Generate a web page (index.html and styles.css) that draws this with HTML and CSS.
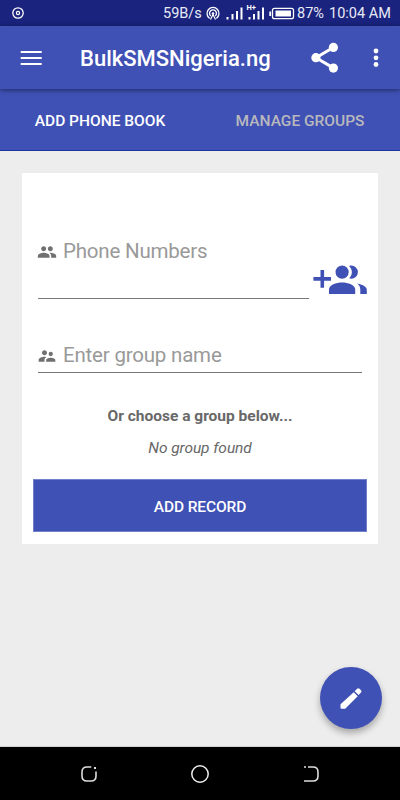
FILE: index.html
```html
<!DOCTYPE html>
<html lang="en">
<head>
<meta charset="utf-8">
<title>BulkSMSNigeria.ng</title>
<link rel="stylesheet" href="styles.css">
</head>
<body>
<div class="screen">
  <header class="status">
    <svg class="status-disc" width="14" height="14" viewBox="0 0 14 14"><circle cx="7" cy="7" r="5.2" fill="none" stroke="#fff" stroke-width="1.3"/><circle cx="7" cy="7" r="1.6" fill="none" stroke="#fff" stroke-width="1.2"/></svg>
    <span class="speed">59B/s</span>
    <svg class="status-icons" width="92" height="26" viewBox="0 0 92 26" fill="none" stroke="#fff">
      <path d="M4.6 18.4A6 6 0 1 1 11.4 18.4M5.7 16A3.5 3.5 0 1 1 10.3 16" stroke-width="1.3"/>
      <circle cx="8" cy="13.5" r="1.3" fill="#fff" stroke="none"/><path d="M8 14.5L5.5 19.5M8 14.5L10.5 19.5" stroke-width="1.2"/>
      <path d="M22.5 17v2.5M27.5 14v5.5M32 11v8.5M36.5 7.5v12" stroke-width="2"/>
      <path d="M44.5 17v2.5M49 14v5.5M53.5 11v8.5M58 7.5v12" stroke-width="2"/>
      <text class="network" x="41.5" y="10" fill="#fff" stroke="none">H+</text>
      <rect x="67.5" y="8.3" width="21" height="10.4" rx="2" stroke-width="1.3"/><rect x="70.5" y="10.5" width="15.5" height="6" fill="#fff" stroke="none"/><path d="M65.2 11.5v4.5" stroke-width="1.8"/>
    </svg>
    <span class="battery">87%</span>
    <span class="clock">10:04 AM</span>
  </header>
  <div class="toolbar">
    <svg class="menu" width="22" height="16" viewBox="0 0 22 16" stroke="#fff" stroke-width="2"><path d="M.7 2h21M.7 8h21M.7 14h21"/></svg>
    <h1 class="title">BulkSMSNigeria.ng</h1>
    <svg class="share" width="28" height="32" viewBox="0 0 28 32"><path d="M22.7 5.3L5 15.7l17.7 10.4" fill="none" stroke="#fff" stroke-width="3"/><g fill="#fff"><circle cx="22.4" cy="5.4" r="4.6"/><circle cx="4.9" cy="15.7" r="4.6"/><circle cx="22.4" cy="26.1" r="4.6"/></g></svg>
    <svg class="more" width="6" height="20" viewBox="0 0 6 20" fill="#fff"><circle cx="3" cy="3" r="2.4"/><circle cx="3" cy="9.8" r="2.4"/><circle cx="3" cy="16.5" r="2.4"/></svg>
  </div>
  <nav class="tabs"><span class="tab active">ADD PHONE BOOK</span><span class="tab">MANAGE GROUPS</span></nav>
  <main class="content">
    <section class="card">
      <div class="numbers">
        <div class="field field-numbers">
          <svg width="20" height="20" viewBox="0 0 24 24" fill="#707070"><path d="M16 11c1.66 0 2.99-1.34 2.99-3S17.66 5 16 5s-3 1.34-3 3 1.34 3 3 3zm-8 0c1.66 0 2.99-1.34 2.99-3S9.66 5 8 5 5 6.34 5 8s1.34 3 3 3zm0 2c-2.33 0-7 1.17-7 3.5V19h14v-2.5c0-2.33-4.67-3.5-7-3.5zm8 0c-.29 0-.62.02-.97.05 1.16.84 1.97 1.97 1.97 3.45V19h6v-2.5c0-2.33-4.67-3.5-7-3.5z"/></svg>
          <span class="hint">Phone Numbers</span>
        </div>
        <svg class="add-people" width="56" height="34" viewBox="0 0 56 34" fill="#3f51b5">
          <path d="M7.5 7h3.6v7.1H18v3.6h-6.9v7H7.5v-7H.4v-3.6h7.1z"/>
          <circle cx="29.1" cy="9.1" r="6.6"/>
          <path d="M38.3 2.5a6.6 6.6 0 1 1 0 13.2c-.8 0-1.5-.1-2.2-.4 3.7-3.6 3.7-8.8 0-12.4.7-.3 1.4-.4 2.2-.4zM16 31v-4.7c0-4.1 7.2-6.7 13.1-6.7s13.1 2.6 13.1 6.7V31zM44.3 20.5c4.8 1 9.5 3.1 9.5 6.2V31h-6.5v-4.5c0-2.6-1.2-4.4-3-6z"/>
        </svg>
      </div>
      <div class="field field-group">
        <svg width="20" height="20" viewBox="0 0 24 24" fill="#707070"><path d="M16.5 12c1.38 0 2.49-1.12 2.49-2.5S17.88 7 16.5 7 14 8.12 14 9.5s1.12 2.5 2.5 2.5zM9 11c1.66 0 2.99-1.34 2.99-3S10.66 5 9 5 6 6.34 6 8s1.34 3 3 3zm7.5 3c-1.83 0-5.5.92-5.5 2.75V19h11v-2.25c0-1.83-3.67-2.75-5.5-2.75zM9 13c-2.33 0-7 1.17-7 3.5V19h7v-2.25c0-.85.33-2.34 2.37-3.47C10.5 13.1 9.66 13 9 13z"/></svg>
        <span class="hint">Enter group name</span>
      </div>
      <p class="choose">Or choose a group below...</p>
      <p class="empty">No group found</p>
      <button class="submit">ADD RECORD</button>
    </section>
    <button class="fab" aria-label="Edit"><svg width="28" height="28" viewBox="0 0 28 28" fill="#fff"><path d="M3.5 20.2v3.6q0 1 1 1h3.7L20.7 12.2l-4-4zM17.7 7.2l2.4-2.5q1.2-1.1 2.4 0l1.5 1.5q1.1 1.2 0 2.4l-2.4 2.5z"/></svg></button>
  </main>
  <footer class="navbar">
    <svg width="18" height="18" viewBox="0 0 18 18" fill="none" stroke="#ddd" stroke-width="1.6"><path d="M11.3 2H7Q2 2 2 7v4q0 5 5 5h4q5 0 5-5V6.5"/><path d="M14 3h2" stroke-width="2"/></svg>
    <svg width="20" height="20" viewBox="0 0 20 20" fill="none" stroke="#eee" stroke-width="1.5"><circle cx="10" cy="10" r="8.2"/></svg>
    <svg width="18" height="18" viewBox="0 0 18 18" fill="none" stroke="#ddd" stroke-width="1.6"><path d="M6 2h5q5 0 5 5v4q0 5-5 5H2M2 2h2"/></svg>
  </footer>
</div>
</body>
</html>
```
FILE: styles.css
```css
* { box-sizing: border-box; }
body { margin: 0; font-family: Roboto, sans-serif; }
svg { display: block; flex: none; }
.screen { width: 400px; height: 800px; display: flex; flex-direction: column; overflow: hidden; background: #ededed; }
.status { height: 26px; flex: none; display: flex; align-items: center; background: #1a237e; color: #e8eaf6; font-size: 14.5px; padding: 1px 0 0 11px; white-space: nowrap; }
.status-disc { margin-top: -1px; }
.status-icons { margin-top: -1px; }
.speed { width: 42px; margin-left: 138px; }
.network { font: 700 7.5px Roboto, sans-serif; }
.battery { width: 32px; }
.clock { width: 62px; }
.toolbar { height: 63px; flex: none; display: flex; align-items: center; padding-left: 20px; background: #3f51b5; color: #fff; position: relative; box-shadow: 0 1px 5px rgba(0, 0, 0, .5); }
.menu { margin-top: 1px; }
.title { margin: 2px 0 0 38px; width: 231px; font-size: 22px; line-height: 28px; font-weight: 500; }
.share { margin-top: 1px; }
.more { margin-left: 33.5px; }
.tabs { height: 62px; flex: none; display: flex; background: #3f51b5; border-bottom: 1px solid #1a34a0; }
.tab { width: 50%; display: flex; align-items: center; justify-content: center; font-size: 15.5px; font-weight: 500; color: #b9b9bd; padding-top: 2px; }
.tab.active { color: #fff; }
.content { flex: 1; position: relative; padding: 22px; border-bottom: 1px solid #d0d0d0; }
.card { height: 371px; background: #fff; padding: 62px 11px 12px; display: flex; flex-direction: column; }
.numbers { display: flex; margin-left: 5px; }
.field { display: flex; flex: none; border-bottom: 1px solid #777; }
.field svg { margin: 7px 0 0 -1px; }
.field-numbers { width: 271px; height: 64px; }
.hint { margin-left: 6px; font-size: 20.5px; letter-spacing: -.2px; line-height: 33px; color: #999; white-space: nowrap; }
.add-people { margin: 28px 0 0 4px; }
.field-group { width: 324px; height: 34px; margin: 40px 0 0 5px; }
.choose, .empty { margin: 0; text-align: center; color: #686868; font-size: 15.5px; line-height: 20px; }
.choose { margin-top: 33px; font-weight: 700; }
.empty { margin-top: 12px; font-style: italic; letter-spacing: -.07px; }
.submit { margin: auto 0 0; height: 53px; border: 1px solid #7380ca; background: #3f51b5; color: #fff; font: 500 15.5px Roboto, sans-serif; letter-spacing: -.1px; padding: 2px 0 0; }
.fab { position: absolute; right: 18px; bottom: 17px; width: 62px; height: 62px; border: 0; border-radius: 50%; background: #3f51b5; display: flex; align-items: center; justify-content: center; padding: 0; box-shadow: 0 4px 7px rgba(0, 0, 0, .3); }
.navbar { height: 53px; flex: none; background: #000; display: flex; align-items: center; justify-content: space-between; padding: 0 80px; }
```
